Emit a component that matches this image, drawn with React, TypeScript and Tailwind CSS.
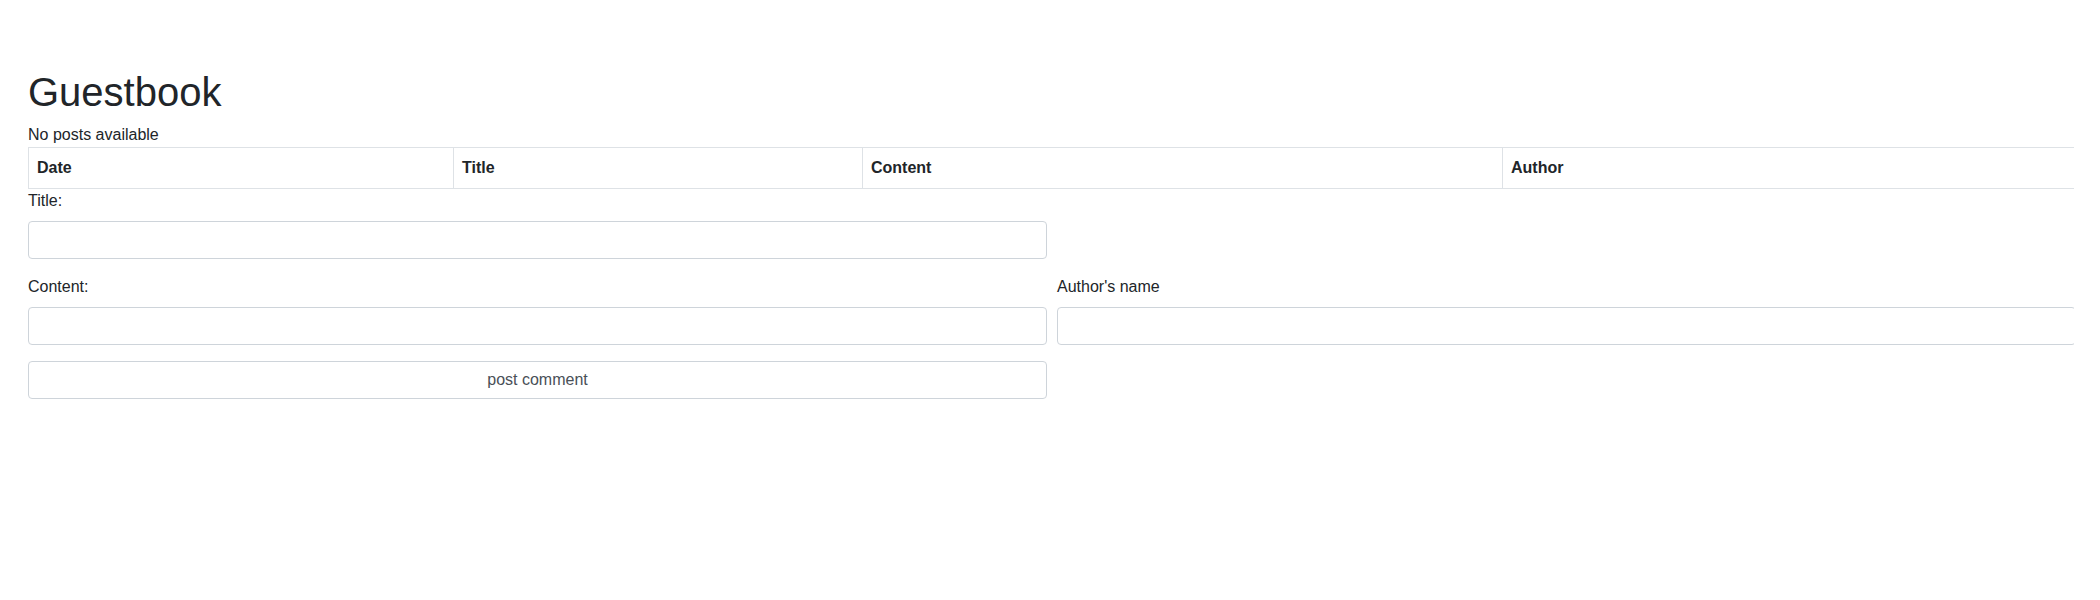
import React from "react";

const columns = [
  { label: "Date", width: "w-[425px]" },
  { label: "Title", width: "w-[409px]" },
  { label: "Content", width: "w-[640px]" },
  { label: "Author", width: "w-[574px]" },
];

const inputCls =
  "block w-full h-[38px] border border-[#ced4da] rounded-[4px] bg-white px-3 text-base text-[#495057] outline-none";

const App = () => {
  return (
    <main
      className="w-[2074px] overflow-hidden bg-white pl-[28px] pt-[68px] text-base leading-6 text-[#212529]"
      style={{ fontFamily: '"Liberation Sans", Arial, sans-serif' }}
    >
      <h1 className="mb-[7px] text-[40px] leading-[48px] font-normal">Guestbook</h1>
      <p>No posts available</p>
      <table className="w-[2048px] table-fixed border-collapse">
        <thead>
          <tr>
            {columns.map((col) => (
              <th
                key={col.label}
                className={`${col.width} border border-[#dee2e6] px-2 py-2 text-left font-bold`}
              >
                {col.label}
              </th>
            ))}
          </tr>
        </thead>
      </table>
      <form className="w-[2048px]">
        <section className="w-[1019px]">
          <label className="mb-2 block">Title:</label>
          <input type="text" className={inputCls} />
        </section>
        <section className="mt-4 grid grid-cols-[1019px_1019px] gap-x-[10px]">
          <section>
            <label className="mb-2 block">Content:</label>
            <input type="text" className={inputCls} />
          </section>
          <section>
            <label className="mb-2 block">Author's name</label>
            <input type="text" className={inputCls} />
          </section>
        </section>
        <section className="mt-4 w-[1019px]">
          <button
            type="button"
            className="h-[38px] w-full rounded-[4px] border border-[#ced4da] bg-white text-base text-[#495057]"
          >
            post comment
          </button>
        </section>
      </form>
    </main>
  );
};

export default App;
